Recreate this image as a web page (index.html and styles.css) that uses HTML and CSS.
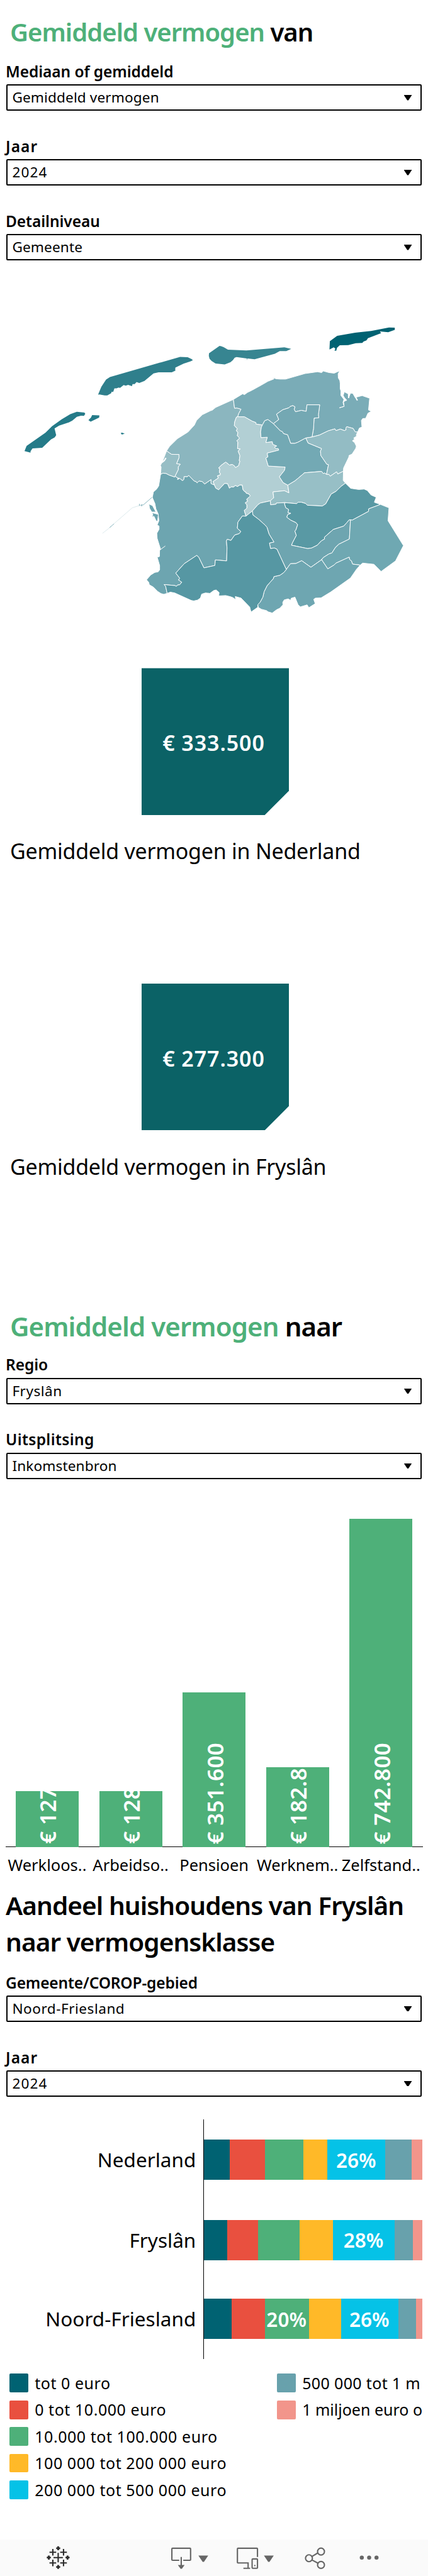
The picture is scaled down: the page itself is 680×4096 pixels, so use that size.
FILE: index.html
```html
<!DOCTYPE html>
<html lang="nl">
<head>
<meta charset="utf-8">
<title>Gemiddeld vermogen</title>
<link rel="stylesheet" href="styles.css">
</head>
<body>
<main class="dashboard">
  <h1 class="title title-van"><span class="accent">Gemiddeld vermogen</span> van</h1>
  <section class="filters">
    <div class="filter"><label class="filter-label">Mediaan of gemiddeld</label><div class="select"><span class="value">Gemiddeld vermogen</span><i class="caret"></i></div></div>
    <div class="filter"><label class="filter-label wide">Jaar</label><div class="select"><span class="value wide">2024</span><i class="caret"></i></div></div>
    <div class="filter"><label class="filter-label">Detailniveau</label><div class="select"><span class="value">Gemeente</span><i class="caret"></i></div></div>
  </section>

  <svg class="map" viewBox="-712.7 0 2280.7 1568" preserveAspectRatio="none">
    <g class="islands" transform="translate(-712.7 0) scale(.7919 1)">
      <path fill="#2f7f8c" d="M660 416L682 376 714 340 740 327 1212 226 1263 228 1290 237 1298 243 1283 248 1235 260 1180 280 1179 293 1183 294 1156 304 1067 304 1033 309 972 347 937 357 919 353 906 363 892 363 888 373 862 367 846 371 832 368 808 382 798 380 784 384 770 384 762 402 751 402 748 409 722 420 705 420 670 415Z"/>
      <path fill="#257b89" d="M165 700L179 674 306 607 350 575 415 540 473 514 517 502 568 506 574 512 565 523 545 522 517 527 487 546 465 555 398 572 367 586 378 620 368 631 343 641 284 683 219 686 206 700 205 708ZM595 544L612 531 620 519 669 520 667 531 610 552ZM812 609L822 607 839 612 820 617Z"/>
      <path class="dam" d="M1025 931L965 970 945 972"/><path class="dam dam-faint" d="M945 972L890 985 770 1063M750 1078L690 1113"/><path class="dam" d="M768 1065L738 1084M938 965V975M953 968V978"/>
    </g>
    <path fill="#378591" d="M401 208L457 171 466 172 479 177 502 190 600 194 803 178 839 186 813 197 778 197 752 210 644 238 606 234 605 243 603 234 548 227 538 230 528 243 515 253 485 264 436 259 415 247 404 236 400 221Z"/>
    <path fill="#006272" d="M1045 147L1084 120 1180 104 1265 96 1360 78 1391 79 1391 90 1356 102 1312 98 1318 107 1248 132 1240 143 1225 149 1218 156 1183 157 1143 167 1098 168 1083 180 1079 195 1069 194 1075 186 1066 178 1043 189Z"/>
    <g class="regions">
      <path fill="#6da5b0" d="M143 817L154 811 172 812 188 820 218 830 220 826 235 835 233 843 245 837 260 848 267 842 268 828 286 828 293 822 323 851 330 852 338 859 348 850 365 853 378 865 412 843 412 863 430 870 437 886 453 894 484 862 500 863 510 886 520 879 532 880 542 872 552 878 565 870 578 870 582 893 590 903 597 905 600 912 612 914 621 925 602 942 607 952 594 960 603 970 603 987 589 998 598 1027 579 1026 555 1057 552 1088 571 1104 562 1115 538 1122 518 1149 498 1143 494 1152 497 1186 495 1252 435 1247 432 1275 374 1287 347 1235 336 1224 269 1266 224 1313 245 1339 239 1348 256 1359 245 1372 235 1373 226 1380 220 1376 162 1371 170 1380 178 1415 160 1420 145 1416 127 1405 105 1384 83 1372 80 1360 68 1347 90 1323 112 1310 130 1307 138 1297 138 1275 125 1233 137 1230 138 1198 143 1193 125 1139 123 1113 135 1093 135 1077 125 1071 134 1050 130 1015 118 990 113 964 99 933 105 905 122 891 133 875Z"/>
      <path fill="#8bb6bf" d="M175 699L190 677 233 637 289 604 323 569 335 545 365 517 411 496 417 495 437 480 531 440 537 484 550 483 572 489 560 510 554 527 547 529 538 553 536 571 552 587 547 597 555 606 552 622 564 635 549 648 555 655 553 687 568 689 556 699 566 723 562 748 566 750 559 773 542 783 538 776 526 767 510 770 490 755 468 770 452 785 459 788 456 808 462 812 460 821 446 824 451 835 423 853 430 870 412 863 412 843 378 865 365 853 348 850 338 859 330 852 323 851 293 822 286 828 268 828 267 842 260 848 245 837 235 835 220 826 237 793 237 779 248 766 228 763 241 733 241 717 201 716Z"/>
      <path fill="#97bec5" d="M175 699L201 716 241 717 241 733 228 763 248 766 237 779 237 793 218 830 188 820 172 812 154 811 143 817 146 780 142 772 152 755Z"/>
      <path fill="#b2cfd4" d="M547 529L538 553 536 571 552 587 547 597 555 606 552 622 564 635 549 648 555 655 553 687 568 689 556 699 566 723 562 748 566 750 559 773 542 783 538 776 526 767 510 770 490 755 468 770 452 785 459 788 456 808 462 812 460 821 446 824 451 835 423 853 430 870 437 886 453 894 484 862 500 863 510 886 520 879 532 880 542 872 552 878 565 870 578 870 582 893 590 903 597 905 600 912 612 914 621 925 602 942 607 952 594 960 603 970 603 987 589 998 598 1027 632 1001 662 969 675 961 728 950 741 938 746 935 742 905 803 899 827 910 821 871 796 858 776 829 803 797 807 780 717 775 704 735 715 729 711 710 773 695 770 687 757 687 750 680 762 674 741 666 738 652 704 657 712 630 678 632 676 604 680 580 686 568 652 564 651 556 631 549 590 527 554 527Z"/>
      <path fill="#7aacb7" d="M531 440L580 412 590 416 606 405 630 394 680 368 715 349 747 337 741 329 757 336 778 338 809 338 857 325 912 310 979 301 1001 305 1010 297 1040 305 1068 308 1098 296 1089 311 1090 332 1098 345 1100 360 1100 386 1104 398 1104 420 1120 440 1115 455 1121 475 1096 482 1121 475 1118 452 1130 445 1116 420 1122 402 1143 412 1145 433 1155 408 1168 410 1180 430 1217 421 1257 434 1251 493 1266 500 1248 509 1236 535 1220 536 1213 546 1216 579 1202 584 1193 604 1180 603 1169 586 1135 577 1130 585 1132 592 1123 597 1101 589 1078 597 1072 588 1036 598 990 619 950 629 958 586 961 534 986 532 984 517 991 467 923 467 919 500 893 495 862 502 855 490 859 477 847 471 833 476 827 482 794 492 761 514 773 541 744 562 715 541 698 547 686 568 652 564 651 556 631 549 590 527 554 527 560 510 572 489 550 483 537 484Z"/>
      <path fill="#74a8b3" d="M744 562L773 541 761 514 794 492 827 482 833 476 847 471 859 477 855 490 862 502 893 495 919 500 923 467 991 467 984 517 986 532 961 534 958 586 950 629 917 634 873 656 858 661 836 661 820 618 798 612 792 602 781 598Z"/>
      <path fill="#73a9b4" d="M686 568L698 547 715 541 744 562 781 598 792 602 798 612 820 618 836 661 858 661 873 656 917 634 929 659 1001 687 995 700 997 722 1029 766 1038 768 1027 817 1017 810 1010 813 1001 802 910 809 860 849 821 871 796 858 776 829 803 797 807 780 717 775 704 735 715 729 711 710 773 695 770 687 757 687 750 680 762 674 741 666 738 652 704 657 712 630 678 632 676 604 680 580Z"/>
      <path fill="#93bcc4" d="M917 634L950 629 990 619 1036 598 1072 588 1078 597 1101 589 1123 597 1132 592 1130 585 1135 577 1169 586 1180 603 1193 604 1186 617 1187 625 1172 634 1177 640 1165 648 1177 657 1186 675 1183 686 1163 715 1147 722 1146 730 1118 785 1117 801 1087 815 1081 804 1047 826 1040 817 1027 817 1038 768 1029 766 997 722 995 700 1001 687 929 659Z"/>
      <path fill="#97bfc6" d="M821 871L860 849 910 809 1001 802 1010 813 1017 810 1027 817 1040 817 1047 826 1081 804 1087 815 1117 801 1116 847 1128 861 1105 877 1078 902 1052 916 1023 965 1005 976 925 972 915 963 893 957 876 957 868 964 805 959 760 961 758 967 729 970 728 950 741 938 746 935 742 905 803 899 827 910Z"/>
      <path fill="#5999a4" d="M1128 861L1156 887 1198 893 1228 891 1245 898 1264 920 1292 932 1282 957 1315 968 1252 990 1251 1003 1164 1047 1149 1045 1119 1077 1063 1094 1016 1133 1017 1142 1000 1151 978 1173 948 1187 927 1190 840 1173 846 1160 866 1124 858 1101 863 1098 873 1070 865 1060 836 1047 815 1032 821 1018 837 1013 822 1010 825 993 810 985 803 965 805 959 868 964 876 957 893 957 915 963 925 972 1005 976 1023 965 1052 916 1078 902 1105 877Z"/>
      <path fill="#6ea5b0" d="M632 1001L662 969 675 961 728 950 729 970 758 967 760 961 805 959 803 965 810 985 825 993 822 1010 837 1013 821 1018 815 1032 836 1047 865 1060 873 1070 863 1098 858 1101 866 1124 846 1160 840 1173 927 1190 948 1187 978 1173 1000 1151 1017 1142 1016 1133 1063 1094 1119 1077 1149 1045 1155 1045 1149 1142 1093 1168 1075 1184 1056 1212 1040 1217 1010 1235 1001 1246 944 1284 895 1251 864 1265 835 1266 813 1295 782 1232 763 1193 749 1187 729 1190 723 1162 747 1157 721 1117 710 1083 700 1072 667 1044 635 1021Z"/>
      <path fill="#6fa8b2" d="M1315 968L1360 985 1355 1050 1437 1175 1395 1252 1318 1305 1280 1269 1220 1263 1207 1273 1166 1268 1160 1252 1150 1245 1148 1233 1078 1263 1067 1273 1034 1292 1001 1246 1010 1235 1040 1217 1056 1212 1075 1184 1093 1168 1149 1142 1155 1045 1164 1047 1251 1003 1252 990Z"/>
      <path fill="#6ea6b1" d="M813 1295L835 1266 864 1265 895 1251 944 1284 1001 1246 1034 1292 1067 1273 1078 1263 1148 1233 1150 1245 1160 1252 1166 1268 1207 1273 1187 1294 1155 1338 1050 1408 998 1438 968 1439 959 1445 967 1467 933 1487 924 1473 888 1483 876 1473 859 1434 839 1440 836 1450 823 1443 802 1448 794 1460 795 1473 778 1490 762 1497 738 1514 716 1508 708 1502 680 1495 664 1486 661 1472 673 1460 688 1434 695 1406 711 1376 744 1341 747 1331 779 1324 800 1310Z"/>
      <path fill="#5697a3" d="M598 1027L632 1001 635 1021 667 1044 700 1072 710 1083 721 1117 747 1157 723 1162 729 1190 749 1187 763 1193 782 1232 813 1295 800 1310 779 1324 747 1331 744 1341 711 1376 695 1406 688 1434 673 1460 661 1472 661 1485 625 1509 618 1484 572 1439 541 1431 543 1447 530 1437 515 1432 490 1426 453 1428 455 1411 439 1398 426 1401 406 1415 382 1413 362 1419 355 1439 340 1449 320 1453 307 1451 218 1413 195 1409 178 1415 170 1380 162 1371 220 1376 226 1380 235 1373 245 1372 256 1359 239 1348 245 1339 224 1313 269 1266 336 1224 347 1235 374 1287 432 1275 435 1247 495 1252 497 1186 494 1152 498 1143 518 1149 538 1122 562 1115 571 1104 552 1088 555 1057 579 1026Z"/>
      <path fill="#6da5b0" d="M81 966L100 974 118 1006 96 1006 84 987ZM98 1010L131 1018 127 1054 119 1050 108 1028 95 1030 102 1022Z"/>
    </g>
    <path class="inlet" d="M150 757L163 747 172 734M1104 415L1134 446M1172 412L1192 445M1145 410V433"/>
    <path class="inlet thin" d="M138 1198L168 1177"/>
  </svg>

  <section class="kpi"><div class="tile"><span class="amount">€ 333.500</span></div><p class="caption">Gemiddeld vermogen in Nederland</p></section>
  <section class="kpi"><div class="tile"><span class="amount">€ 277.300</span></div><p class="caption">Gemiddeld vermogen in Fryslân</p></section>

  <h1 class="title title-naar"><span class="accent">Gemiddeld vermogen</span> naar</h1>
  <section class="filters">
    <div class="filter"><label class="filter-label">Regio</label><div class="select"><span class="value loose">Fryslân</span><i class="caret"></i></div></div>
    <div class="filter"><label class="filter-label open">Uitsplitsing</label><div class="select"><span class="value">Inkomstenbron</span><i class="caret"></i></div></div>
  </section>

  <section class="columns">
    <div class="plot">
      <div class="cell"><div class="column" style="height:88.7px"><span class="amount">€ 127</span></div></div>
      <div class="cell"><div class="column" style="height:88.7px"><span class="amount">€ 128</span></div></div>
      <div class="cell"><div class="column" style="height:246px"><span class="amount">€ 351.600</span></div></div>
      <div class="cell"><div class="column" style="height:126.8px"><span class="amount">€ 182.8</span></div></div>
      <div class="cell"><div class="column" style="height:522.5px"><span class="amount">€ 742.800</span></div></div>
    </div>
    <div class="ticks"><span>Werkloos..</span><span>Arbeidso..</span><span>Pensioen</span><span>Werknem..</span><span>Zelfstand..</span></div>
  </section>

  <h2 class="heading">Aandeel huishoudens van Fryslân<br>naar vermogensklasse</h2>
  <section class="filters">
    <div class="filter"><label class="filter-label tight">Gemeente/COROP-gebied</label><div class="select"><span class="value loose">Noord-Friesland</span><i class="caret"></i></div></div>
    <div class="filter"><label class="filter-label wide">Jaar</label><div class="select"><span class="value wide">2024</span><i class="caret"></i></div></div>
  </section>

  <section class="stacks">
    <div class="names"><span class="name">Nederland</span><span class="name">Fryslân</span><span class="name">Noord-Friesland</span></div>
    <div class="tracks">
      <div class="track"><i class="c1" style="width:41.2px"></i><i class="c2" style="width:55.1px"></i><i class="c3" style="width:61.6px"></i><i class="c4" style="width:38.1px"></i><i class="c5" style="width:92px"><b>26%</b></i><i class="c6" style="width:42px"></i><i class="c7"></i></div>
      <div class="track"><i class="c1" style="width:36.9px"></i><i class="c2" style="width:49px"></i><i class="c3" style="width:65.9px"></i><i class="c4" style="width:52.9px"></i><i class="c5" style="width:98px"><b>28%</b></i><i class="c6" style="width:29.5px"></i><i class="c7"></i></div>
      <div class="track"><i class="c1" style="width:43.4px"></i><i class="c2" style="width:52.9px"></i><i class="c3" style="width:70.2px"><b>20%</b></i><i class="c4" style="width:50.8px"></i><i class="c5" style="width:91.5px"><b>26%</b></i><i class="c6" style="width:27.8px"></i><i class="c7"></i></div>
    </div>
  </section>

  <section class="legend">
    <div class="keys">
      <div class="key"><i class="c1"></i><span>tot 0 euro</span></div>
      <div class="key"><i class="c2"></i><span>0 tot 10.000 euro</span></div>
      <div class="key"><i class="c3"></i><span>10.000 tot 100.000 euro</span></div>
      <div class="key"><i class="c4"></i><span>100 000 tot 200 000 euro</span></div>
      <div class="key"><i class="c5"></i><span>200 000 tot 500 000 euro</span></div>
    </div>
    <div class="keys keys-end">
      <div class="key"><i class="c6"></i><span>500 000 tot 1 m</span></div>
      <div class="key"><i class="c7"></i><span class="snug">1 miljoen euro o</span></div>
    </div>
  </section>

  <footer class="toolbar">
    <svg class="icons" viewBox="0 0 960 81">
      <path class="logo" d="M120 40.500H141M130.500 30V51M111 28.500H126M118.500 21V36M135 28.500H150M142.500 21V36M111 52.500H126M118.500 45V60M135 52.500H150M142.500 45V60"/>
      <path class="logo small" d="M126 19.500H135M130.500 15V24M126 61.500H135M130.500 57V66M105 40.500H114M109.500 36V45M147 40.500H156M151.500 36V45"/>
      <g class="line">
        <path d="M402 46.500H387Q385.500 46.500 385.500 45V21Q385.500 19.500 387 19.500H426Q427.500 19.500 427.500 21V45Q427.500 46.500 426 46.500H411M406.500 39V58"/>
        <path d="M577.500 39V21Q577.500 19.500 576 19.500H534Q532.500 19.500 532.500 21V51Q532.500 52.500 534 52.500H556.500V64.500M546 64.500H561"/>
        <rect x="565.500" y="43.500" width="12" height="21" rx="1.500"/>
        <circle cx="693" cy="42" r="7.700"/><circle cx="720" cy="27" r="7.700"/><circle cx="720" cy="57" r="7.700"/>
        <path d="M700 38L713 30M700 46L713 53"/>
      </g>
      <path class="solid" d="M399 57H414L408 65.500H405ZM445 36H467L457.500 50H454.500ZM592 36H614L604.500 50H601.500Z"/>
      <g class="solid"><circle cx="571.500" cy="58.500" r="1.600"/><circle cx="811.500" cy="40.500" r="4.600"/><circle cx="828" cy="40.500" r="4.600"/><circle cx="844.500" cy="40.500" r="4.600"/></g>
    </svg>
  </footer>
</main>
</body>
</html>
```
FILE: styles.css
```css
* { box-sizing: border-box; }
body { margin: 0; background: #fff; color: #000; font-family: "Noto Sans", "Open Sans", sans-serif; }
.dashboard { width: 680px; height: 4096px; display: flex; flex-direction: column; overflow: hidden; }
.dashboard > * { flex: none; }
h1, h2, p { margin: 0; }
i { font-style: normal; }

.title { padding-left: 16px; line-height: 56px; font-weight: 600; white-space: nowrap; }
.title-van { margin-top: 22.5px; font-size: 40px; letter-spacing: -1px; }
.title-naar { margin-top: 86.4px; font-size: 42px; letter-spacing: -.92px; }
.accent { color: #4eb079; }

.filters { display: flex; flex-direction: column; gap: 41.5px; margin: 20.2px 10.5px 0 9px; }
.title-naar + .filters { margin-top: 18.7px; }
.heading + .filters { margin-top: 21.7px; }
.filter { height: 77.5px; }
.filter-label { display: block; height: 35.5px; line-height: 30px; font-size: 24.5px; font-weight: 600; white-space: nowrap; letter-spacing: -.08px; }
.filter-label.open { letter-spacing: .35px; }
.filter-label.wide { letter-spacing: 1.1px; }
.filter-label.tight { letter-spacing: -.15px; }
.select { display: flex; align-items: center; justify-content: space-between; height: 42.2px; margin-left: 1.4px; padding: 0 13px 0 7px; border: 2px solid #000; border-radius: 2px; }
.value { font-size: 22.6px; line-height: 38px; white-space: nowrap; letter-spacing: .12px; }
.value.loose { letter-spacing: .5px; }
.value.wide { letter-spacing: 1.1px; }
.caret { width: 13px; height: 8.5px; background: #000; clip-path: polygon(0 0, 100% 0, 57% 100%, 43% 100%); }

.map { display: block; width: 680px; height: 495.8px; margin-top: 81.6px; }
.regions path { stroke: #fff; stroke-width: 1; stroke-linejoin: round; vector-effect: non-scaling-stroke; }
.dam { fill: none; stroke: #6da5b0; stroke-width: .8; vector-effect: non-scaling-stroke; }
.dam-faint { stroke: #d3e5e7; }
.inlet { fill: none; stroke: #fff; stroke-width: 2; vector-effect: non-scaling-stroke; }
.inlet.thin { stroke-width: 1; }

.kpi { height: 501.3px; padding-top: 70.8px; }
.tile { display: flex; align-items: center; justify-content: center; width: 234px; height: 233.7px; margin-left: 225px; padding: 4px 5px 0 0; background: #0b6266; clip-path: polygon(0 0, 100% 0, 100% 83.5%, 83.6% 100%, 0 100%); }
.amount { color: #fff; font-size: 34px; font-weight: 600; line-height: 44px; letter-spacing: .9px; white-space: nowrap; }
.caption { margin: 33.4px 0 0 16px; font-size: 34px; line-height: 48px; letter-spacing: -.25px; white-space: nowrap; }

.columns { margin: 61.9px 8.5px 0 8.7px; }
.plot { display: grid; grid-template-columns: repeat(5, 1fr); align-items: end; height: 523.5px; border-bottom: 1px solid #000; }
.cell { display: flex; justify-content: center; margin-bottom: -1px; }
.column { display: flex; flex-direction: column-reverse; align-items: center; width: 100px; padding: 0 0 5px 3px; overflow: hidden; background: #4eb079; }
.column .amount { flex: none; writing-mode: vertical-rl; transform: rotate(180deg); font-size: 34.8px; letter-spacing: .4px; }
.ticks { display: grid; grid-template-columns: repeat(5, 132.6px); height: 36px; margin-top: 10px; font-size: 25.5px; line-height: 36px; }
.ticks span { display: flex; justify-content: center; white-space: nowrap; }

.heading { margin: 18px 0 0 9px; font-size: 40.5px; line-height: 57.4px; font-weight: 600; letter-spacing: -.94px; white-space: nowrap; }

.stacks { display: flex; height: 380.3px; margin-top: 36.3px; }
.names, .tracks { display: grid; grid-template-rows: 127.4px 128px 122.6px; align-items: center; }
.names { width: 323.3px; padding-right: 12px; text-align: right; }
.name { font-size: 31.5px; line-height: 44px; white-space: nowrap; }
.tracks { width: 348.1px; border-left: 1px solid #000; }
.track { display: flex; height: 64px; }
.track i { display: flex; align-items: center; justify-content: center; }
.track b { padding-right: 1px; color: #fff; font-size: 31.5px; font-weight: 600; }
.track .c7 { flex: 1; }
.c1 { background: #006272; }
.c2 { background: #e9503f; }
.c3 { background: #4eb079; }
.c4 { background: #ffb928; }
.c5 { background: #05c2e7; }
.c6 { background: #68a1ac; }
.c7 { background: #f2958b; }

.legend { display: grid; grid-template-columns: 425px 240px; height: 263.3px; margin: 23.5px 0 0 14.7px; }
.keys { display: flex; flex-direction: column; gap: 12.7px; }
.key { display: flex; align-items: center; gap: 10.5px; height: 29.8px; font-size: 25px; line-height: 29px; letter-spacing: .55px; white-space: nowrap; }
.keys-end .key { letter-spacing: .35px; }
.keys-end .snug { letter-spacing: 0; }
.key i { flex: none; width: 30px; height: 29.8px; border-radius: 2px; }

.toolbar { height: 58.5px; background: #fafafa; }
.icons { display: block; width: 680px; height: 57.4px; }
.logo { fill: none; stroke: #2d2d2d; stroke-width: 3; }
.small { stroke-width: 4; }
.line { fill: none; stroke: #666; stroke-width: 3; }
.solid { fill: #666; }
```
